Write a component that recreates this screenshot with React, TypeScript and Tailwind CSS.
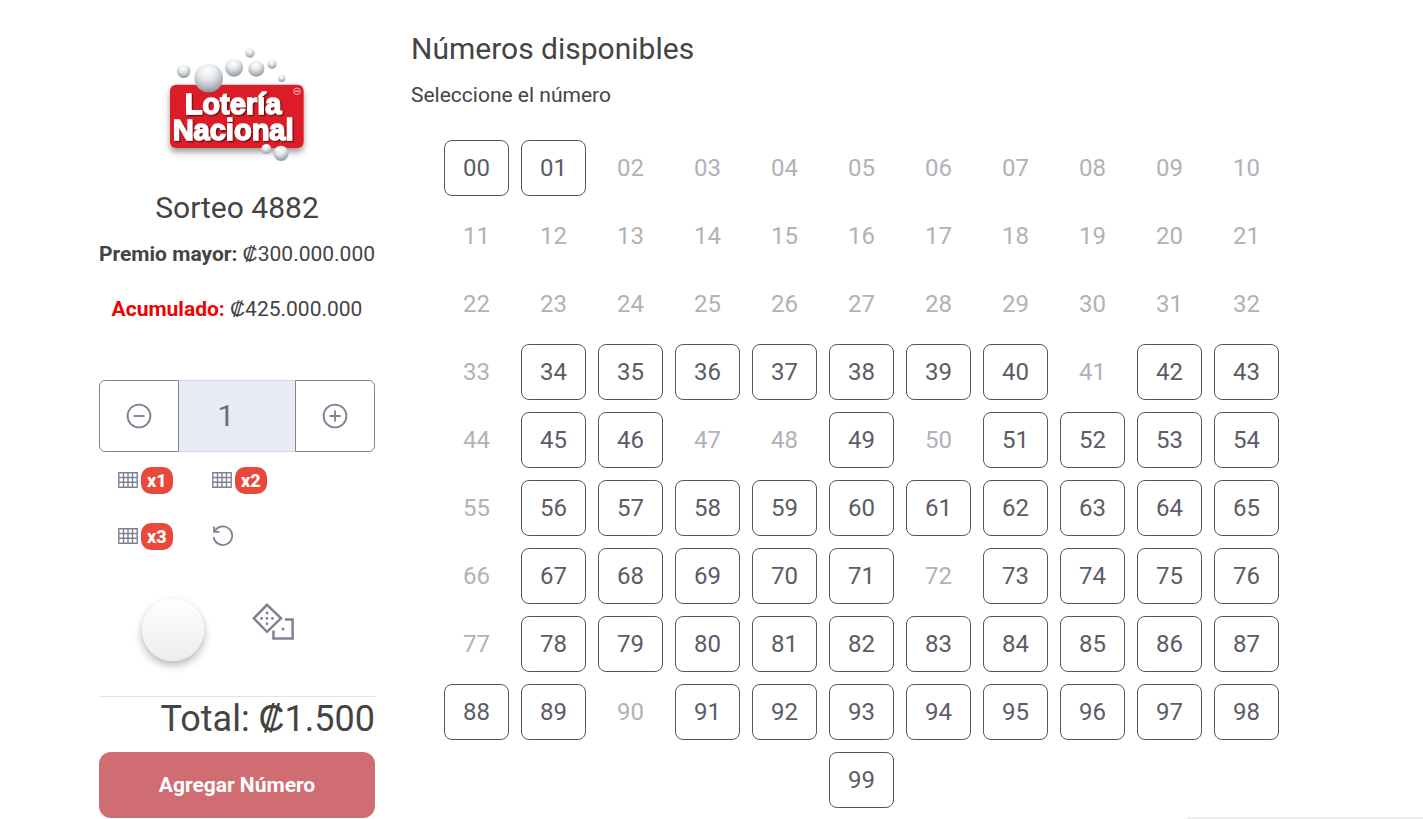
import { useState } from 'react';

const unavailable = [
  2, 3, 4, 5, 6, 7, 8, 9, 10, 11, 12, 13, 14, 15, 16, 17, 18, 19, 20, 21, 22,
  23, 24, 25, 26, 27, 28, 29, 30, 31, 32, 33, 41, 44, 47, 48, 50, 55, 66, 72,
  77, 90,
];

const numbers = Array.from({ length: 100 }, (_, i) => ({
  label: String(i).padStart(2, '0'),
  available: !unavailable.includes(i),
}));

function Logo() {
  const balls = [
    { x: 101, y: 94, r: 20 },
    { x: 176, y: 114, r: 43 },
    { x: 252, y: 83, r: 27 },
    { x: 300, y: 39, r: 14 },
    { x: 319, y: 86, r: 24 },
    { x: 366, y: 72, r: 14 },
    { x: 395, y: 115, r: 11 },
    { x: 349, y: 327, r: 15 },
    { x: 393, y: 340, r: 23 },
  ];

  return (
    <svg
      viewBox="6 0 510 405"
      className="w-[170px] h-[135px]"
      role="img"
      aria-label="Lotería Nacional"
    >
      <defs>
        <radialGradient id="ball" cx="0.45" cy="0.25" r="0.78">
          <stop offset="0" stopColor="#ffffff" />
          <stop offset="0.4" stopColor="#e6e9eb" />
          <stop offset="0.8" stopColor="#a9b1b6" />
          <stop offset="1" stopColor="#828c92" />
        </radialGradient>
        <filter id="shadow" x="-20%" y="-20%" width="140%" height="150%">
          <feDropShadow dx="0" dy="12" stdDeviation="10" floodColor="#000" floodOpacity="0.4" />
        </filter>
        <filter id="text-shadow">
          <feDropShadow dx="4" dy="4" stdDeviation="2" floodColor="#5c0a0d" floodOpacity="0.9" />
        </filter>
      </defs>
      <rect x="60" y="134" width="401" height="190" rx="18" fill="#dc1f26" filter="url(#shadow)" />
      {balls.map((b) => (
        <circle key={b.x} cx={b.x} cy={b.y} r={b.r} fill="url(#ball)" />
      ))}
      <g
        fontFamily="Liberation Sans, Arial, sans-serif"
        fontWeight="700"
        fontSize="87"
        fill="#fff"
        stroke="#fff"
        strokeWidth="4"
        filter="url(#text-shadow)"
      >
        <text x="104" y="221">Lotería</text>
        <text x="68" y="300">Nacional</text>
      </g>
      <circle cx="441" cy="154" r="10" fill="none" stroke="#f4a9ab" strokeWidth="3" />
      <path d="M435 154h12" stroke="#f4a9ab" strokeWidth="5" />
    </svg>
  );
}

function StepIcon({ plus }: { plus?: boolean }) {
  return (
    <svg viewBox="0 0 26 26" className="size-[26px]" fill="none" stroke="#7e8292" strokeWidth="1.9" aria-hidden="true">
      <circle cx="13" cy="13" r="11.4" />
      <path d={plus ? 'M7.5 13h11M13 7.5v11' : 'M7.5 13h11'} />
    </svg>
  );
}

function TableIcon() {
  return (
    <svg viewBox="0 0 20 16" className="w-5 h-4" fill="none" stroke="#7e8292" strokeWidth="1.4" aria-hidden="true">
      <path d="M.8.8h18.4v14.4H.8zM.8 5.5h18.4M.8 10.3h18.4M5.5.8v14.4M10 .8v14.4M14.5.8v14.4" />
    </svg>
  );
}

function ResetIcon() {
  return (
    <svg viewBox="0 0 22 22" className="size-[22px]" fill="none" stroke="#7e8292" strokeWidth="1.8" aria-hidden="true">
      <path d="M2.6 6.5A9.3 9.3 0 1 1 1.7 12" />
      <path d="M2 1.5v5.4h5.4" />
    </svg>
  );
}

function DiceIcon() {
  return (
    <svg viewBox="0 0 42 37" className="w-[42px] h-[37px]" fill="none" stroke="#7e8292" strokeWidth="2.5" aria-hidden="true">
      <path d="M15 1.8 29 15.3 15 28.8 1.8 15.3z" />
      <path d="M33 16.6h7.6v19H21.5v-8" />
      <g fill="#7e8292" stroke="none">
        <circle cx="15" cy="10" r="1.4" />
        <circle cx="9.6" cy="15.4" r="1.4" />
        <circle cx="15" cy="15.4" r="1.4" />
        <circle cx="20.4" cy="15.4" r="1.4" />
        <circle cx="15" cy="20.8" r="1.4" />
        <circle cx="31" cy="26" r="1.5" />
      </g>
    </svg>
  );
}

export default function App() {
  const [quantity, setQuantity] = useState(1);
  const [selected, setSelected] = useState('');

  return (
    <div className="flex gap-9 pl-[99px] pr-[111px] bg-white text-[#444] font-['Roboto',sans-serif] text-[21px] leading-[30px]">
      <aside className="w-[276px] shrink-0 pt-10">
        <div className="flex justify-center">
          <Logo />
        </div>
        <h2 className="mt-[13px] text-center text-3xl leading-10">Sorteo 4882</h2>
        <p className="mt-[11px] text-center whitespace-nowrap">
          <strong>Premio mayor:</strong> ₡300.000.000
        </p>
        <p className="mt-[25px] text-center whitespace-nowrap">
          <strong className="text-[#f00000]">Acumulado:</strong> ₡425.000.000
        </p>

        <div className="mt-14 flex h-[72px]">
          <button
            type="button"
            aria-label="Restar"
            onClick={() => setQuantity(Math.max(1, quantity - 1))}
            className="flex w-20 shrink-0 items-center justify-center rounded-l-md border border-[#7e8292]"
          >
            <StepIcon />
          </button>
          <input
            type="text"
            inputMode="numeric"
            aria-label="Cantidad"
            value={quantity}
            onChange={(e) => setQuantity(Number(e.target.value) || 1)}
            className="min-w-0 flex-1 border-y border-[#d3d7e4] bg-[#e8ebf4] pr-[22px] text-center text-3xl text-[#6b6e7c]"
          />
          <button
            type="button"
            aria-label="Sumar"
            onClick={() => setQuantity(quantity + 1)}
            className="flex w-20 shrink-0 items-center justify-center rounded-r-md border border-[#7e8292]"
          >
            <StepIcon plus />
          </button>
        </div>

        <div className="grid grid-cols-[94px_94px] auto-rows-[56px] pl-[19px]">
          {[1, 2, 3].map((n) => (
            <button key={n} type="button" className="flex items-center gap-[3px]">
              <TableIcon />
              <span className="rounded-[10px] bg-[#e8493c] px-1.5 text-lg leading-[27px] font-extrabold text-white">
                x{n}
              </span>
            </button>
          ))}
          <button type="button" aria-label="Reiniciar" className="flex items-center">
            <ResetIcon />
          </button>
        </div>

        <div className="flex gap-12 border-b border-[#e4e4e4] py-[35px] pl-[43px]">
          <button
            type="button"
            aria-label="Número al azar"
            className="size-[62px] rounded-full bg-linear-to-b from-white to-[#ececec] shadow-[0_4px_8px_rgba(0,0,0,0.3)]"
          />
          <button type="button" aria-label="Lanzar dados" className="flex pt-1">
            <DiceIcon />
          </button>
        </div>

        <p className="text-right text-4xl leading-[44px]">Total: ₡1.500</p>
        <button
          type="button"
          className="mt-[11px] h-[66px] w-full rounded-xl bg-[#cf6d72] font-bold text-white"
        >
          Agregar Número
        </button>
      </aside>

      <main className="min-w-0 flex-1 pt-[29px]">
        <h1 className="text-3xl leading-10">Números disponibles</h1>
        <p className="mt-[11px]">Seleccione el número</p>
        <div className="mt-[30px] flex flex-wrap justify-center gap-3">
          {numbers.map((n) => (
            <button
              key={n.label}
              type="button"
              disabled={!n.available}
              aria-pressed={selected === n.label}
              onClick={() => setSelected(n.label)}
              className={
                n.available
                  ? 'h-14 w-[65px] rounded-lg border border-[#55565c] text-2xl text-[#5b5c66]'
                  : 'h-14 w-[65px] text-2xl text-[#b1b2b8]'
              }
            >
              {n.label}
            </button>
          ))}
        </div>
      </main>

      <div className="fixed right-0 bottom-0 h-0.5 w-[236px] rounded-tl bg-[#ececec]" />
    </div>
  );
}
